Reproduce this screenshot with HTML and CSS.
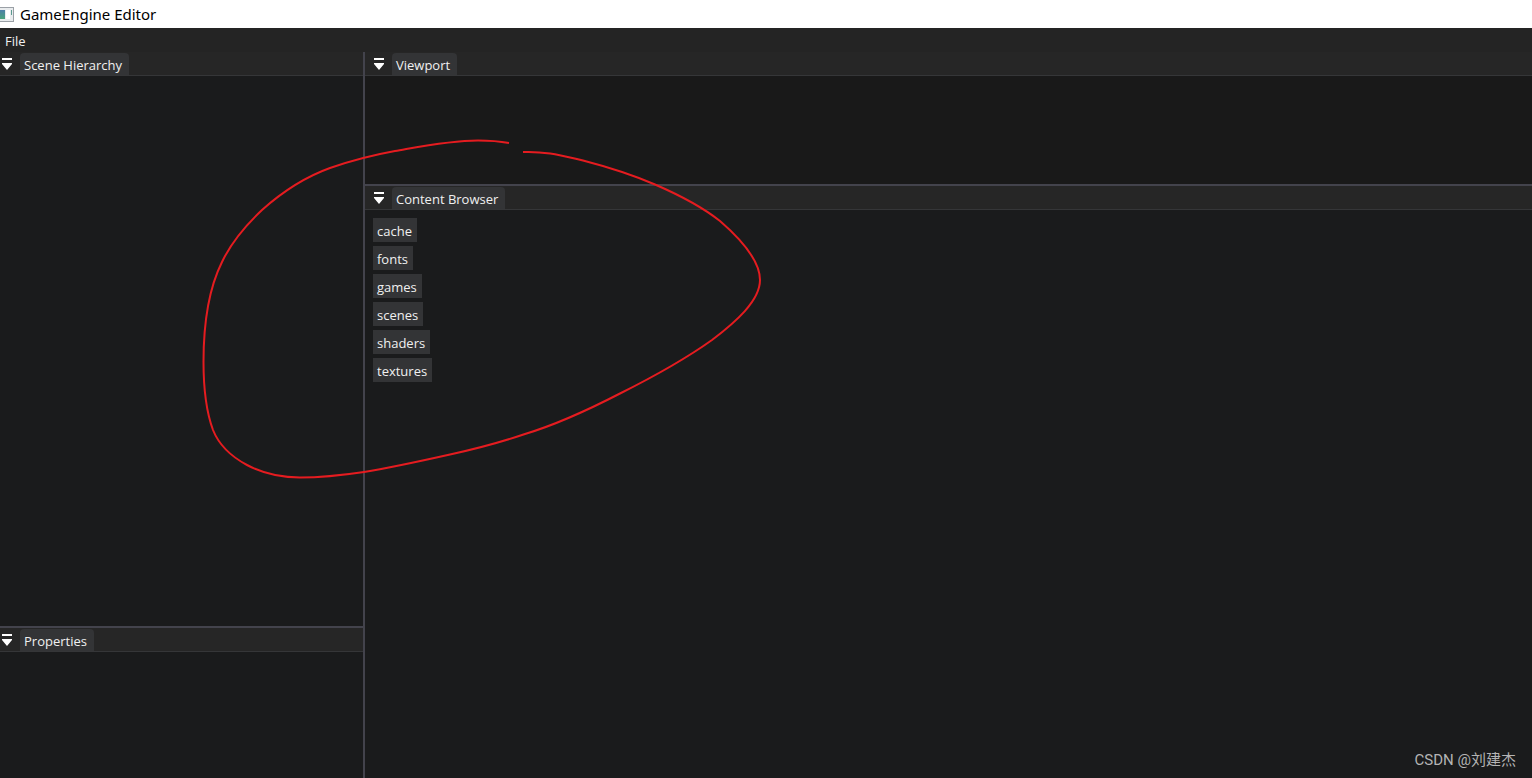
FILE: index.html
```html
<!DOCTYPE html>
<html lang="en">
<head>
<meta charset="utf-8">
<title>GameEngine Editor</title>
<link rel="stylesheet" href="styles.css">
</head>
<body class="app">
<svg class="defs" aria-hidden="true">
  <symbol id="tab-menu" viewBox="0 0 10 12">
    <path d="M0 0h10v2H0zM0 5h10v1L5 12 0 6z" fill="#fff"/>
  </symbol>
</svg>
<header class="titlebar">
  <svg class="titlebar-icon" viewBox="0 0 14 15" aria-hidden="true">
    <defs>
      <linearGradient id="pane" x1="0" y1="0" x2="0" y2="1">
        <stop offset="0" stop-color="#4d7fa8"/>
        <stop offset="1" stop-color="#4aa47c"/>
      </linearGradient>
    </defs>
    <path d="M0 0h14v15H0z" fill="#9aa0a6"/>
    <path d="M0 1h13v13H0z" fill="#e9ecee"/>
    <path d="M0 3h5v9H0z" fill="url(#pane)"/>
    <path d="M6 3h4v9H6z" fill="#fff"/>
    <path d="M11 3h1v5h-1z" fill="#5a9a90"/>
  </svg>
  <h1 class="titlebar-text">GameEngine Editor</h1>
</header>
<nav class="menubar">
  <button class="menu-item" type="button">File</button>
</nav>
<main class="dock">
  <div class="column column-left">
    <section class="panel">
      <div class="tabbar">
        <button class="tab-menu" type="button" aria-label="Scene Hierarchy options"><svg class="tab-icon"><use href="#tab-menu"/></svg></button>
        <button class="tab" type="button">Scene Hierarchy</button>
      </div>
    </section>
    <section class="panel">
      <div class="tabbar">
        <button class="tab-menu" type="button" aria-label="Properties options"><svg class="tab-icon"><use href="#tab-menu"/></svg></button>
        <button class="tab" type="button">Properties</button>
      </div>
    </section>
  </div>
  <div class="column column-right">
    <section class="panel panel-viewport">
      <div class="tabbar">
        <button class="tab-menu" type="button" aria-label="Viewport options"><svg class="tab-icon"><use href="#tab-menu"/></svg></button>
        <button class="tab" type="button">Viewport</button>
      </div>
    </section>
    <section class="panel">
      <div class="tabbar">
        <button class="tab-menu" type="button" aria-label="Content Browser options"><svg class="tab-icon"><use href="#tab-menu"/></svg></button>
        <button class="tab" type="button">Content Browser</button>
      </div>
      <div class="folders">
        <button class="folder" type="button">cache</button>
        <button class="folder" type="button">fonts</button>
        <button class="folder" type="button">games</button>
        <button class="folder" type="button">scenes</button>
        <button class="folder" type="button">shaders</button>
        <button class="folder" type="button">textures</button>
      </div>
    </section>
  </div>
</main>
<svg class="annotation" width="780" height="500" viewBox="0 0 780 500" aria-hidden="true">
  <path d="M509 143C498 141 488 140.500 478 140.500C450 140.500 421 146.500 395 151C373 155 350 161 330 168C305 177 281 193 262 210C246 225 231 243 222 262C208 290 203.500 328 203.500 362C203.500 386 206 411 213 430C219 445 232 457 247 465C262 473 281 477.500 300 477.500C322 477.500 344 475 364 472C392 467.500 421 461 450 454.500C475 449 500 442.500 525 434C558 424 590 409 620 393.500C652 377.500 684 360 712 340C735 322.500 760 301 760 280C760 261 743 241 720 221C701 206 677 194 655 184.500C633 175 608 167 583 160.500C563 156 545 151 523 152"/>
</svg>
<p class="watermark">CSDN @刘建杰</p>
</body>
</html>
```

FILE: styles.css
```css
* {
  box-sizing: border-box;
}

.app {
  display: flex;
  flex-direction: column;
  position: relative;
  min-height: 100vh;
  margin: 0;
  background: #1a1b1c;
  color: #f0f0f0;
  font: 13px/20px "Open Sans", "Noto Sans", sans-serif;
}

button {
  border: 0;
  margin: 0;
  color: inherit;
  font: inherit;
}

.defs {
  display: none;
}

.titlebar {
  display: flex;
  align-items: center;
  gap: 6px;
  height: 28px;
  background: #fff;
  color: #000;
}

.titlebar-icon {
  width: 14px;
  height: 15px;
}

.titlebar-text {
  margin: 0;
  font-family: "Noto Sans", "Open Sans", sans-serif;
  font-size: 15px;
  font-weight: 400;
}

.menubar {
  display: flex;
  height: 24px;
  background: #242424;
}

.menu-item {
  padding: 3px 5px 1px;
  background: none;
}

.dock {
  display: grid;
  grid-template-columns: 363px 1fr;
  gap: 2px;
  flex: 1;
  background: #43434c;
}

.column {
  display: grid;
  gap: 2px;
}

.column-left {
  grid-template-rows: 574fr 150fr;
}

.column-right {
  grid-template-rows: 132fr 592fr;
}

.panel {
  background: #1a1b1c;
}

.panel-viewport {
  background: #191919;
}

.tabbar {
  display: flex;
  align-items: flex-end;
  gap: 8px;
  height: 24px;
  padding-left: 9px;
  border-bottom: 1px solid #353638;
  background: #262626;
}

.column-left .tabbar {
  padding-left: 2px;
}

.tab-menu {
  display: flex;
  padding: 0 0 5px;
  background: none;
}

.tab-icon {
  width: 10px;
  height: 12px;
}

.tab {
  padding: 2px 7px 0 4px;
  border-radius: 4px 4px 0 0;
  background: #333436;
}

.folders {
  display: flex;
  flex-direction: column;
  align-items: flex-start;
  gap: 4px;
  padding: 8px;
}

.folder {
  padding: 3px 5px 1px 4px;
  background: #333436;
}

.annotation {
  position: absolute;
  top: 0;
  left: 0;
  fill: none;
  stroke: #e51c20;
  stroke-width: 2;
  pointer-events: none;
}

.watermark {
  position: absolute;
  right: 16px;
  bottom: 8px;
  margin: 0;
  color: #b4b4b4;
  font: 15px/20px Roboto, "Noto Sans CJK SC", sans-serif;
}
```
